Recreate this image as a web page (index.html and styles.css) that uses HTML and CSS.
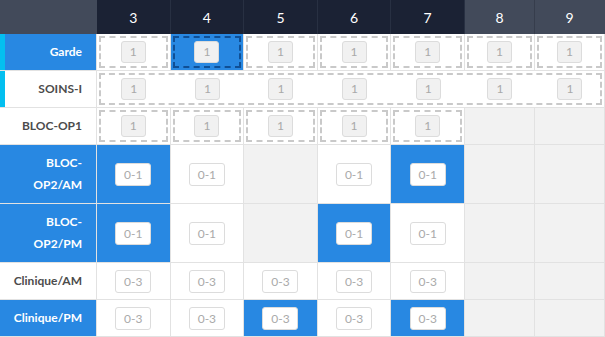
FILE: index.html
```html
<!DOCTYPE html>
<html lang="fr">
<head>
<meta charset="utf-8">
<title>Planning</title>
<link rel="stylesheet" href="styles.css">
</head>
<body>
<table class="planning">
  <colgroup>
    <col class="c-label">
    <col class="c-day"><col class="c-day"><col class="c-day"><col class="c-day"><col class="c-day">
    <col class="c-we"><col class="c-we">
  </colgroup>
  <thead>
    <tr>
      <th class="corner"></th>
      <th class="day">3</th>
      <th class="day">4</th>
      <th class="day">5</th>
      <th class="day">6</th>
      <th class="day">7</th>
      <th class="day day--we">8</th>
      <th class="day day--we">9</th>
    </tr>
  </thead>
  <tbody>
    <tr class="row">
      <th class="label label--blue label--flag">Garde</th>
      <td class="cell"><div class="slot"><span class="pill">1</span></div></td>
      <td class="cell cell--blue"><div class="slot slot--active"><span class="pill">1</span></div></td>
      <td class="cell"><div class="slot"><span class="pill">1</span></div></td>
      <td class="cell"><div class="slot"><span class="pill">1</span></div></td>
      <td class="cell"><div class="slot"><span class="pill">1</span></div></td>
      <td class="cell"><div class="slot"><span class="pill">1</span></div></td>
      <td class="cell"><div class="slot"><span class="pill">1</span></div></td>
    </tr>
    <tr class="row">
      <th class="label label--flag">SOINS-I</th>
      <td class="cell" colspan="7">
        <div class="slot slot--wide">
          <div class="slot-grid">
            <span class="slot-col"><span class="pill">1</span></span>
            <span class="slot-col"><span class="pill">1</span></span>
            <span class="slot-col"><span class="pill">1</span></span>
            <span class="slot-col"><span class="pill">1</span></span>
            <span class="slot-col"><span class="pill">1</span></span>
            <span class="slot-col"><span class="pill">1</span></span>
            <span class="slot-col"><span class="pill">1</span></span>
          </div>
        </div>
      </td>
    </tr>
    <tr class="row">
      <th class="label">BLOC-OP1</th>
      <td class="cell"><div class="slot"><span class="pill">1</span></div></td>
      <td class="cell"><div class="slot"><span class="pill">1</span></div></td>
      <td class="cell"><div class="slot"><span class="pill">1</span></div></td>
      <td class="cell"><div class="slot"><span class="pill">1</span></div></td>
      <td class="cell"><div class="slot"><span class="pill">1</span></div></td>
      <td class="cell cell--off"></td>
      <td class="cell cell--off"></td>
    </tr>
    <tr class="row row--tall">
      <th class="label label--blue">BLOC-OP2/AM</th>
      <td class="cell cell--blue"><span class="btn">0-1</span></td>
      <td class="cell"><span class="btn">0-1</span></td>
      <td class="cell cell--off"></td>
      <td class="cell"><span class="btn">0-1</span></td>
      <td class="cell cell--blue"><span class="btn">0-1</span></td>
      <td class="cell cell--off"></td>
      <td class="cell cell--off"></td>
    </tr>
    <tr class="row row--tall">
      <th class="label label--blue">BLOC-OP2/PM</th>
      <td class="cell cell--blue"><span class="btn">0-1</span></td>
      <td class="cell"><span class="btn">0-1</span></td>
      <td class="cell cell--off"></td>
      <td class="cell cell--blue"><span class="btn">0-1</span></td>
      <td class="cell"><span class="btn">0-1</span></td>
      <td class="cell cell--off"></td>
      <td class="cell cell--off"></td>
    </tr>
    <tr class="row">
      <th class="label">Clinique/AM</th>
      <td class="cell"><span class="btn">0-3</span></td>
      <td class="cell"><span class="btn">0-3</span></td>
      <td class="cell"><span class="btn">0-3</span></td>
      <td class="cell"><span class="btn">0-3</span></td>
      <td class="cell"><span class="btn">0-3</span></td>
      <td class="cell cell--off"></td>
      <td class="cell cell--off"></td>
    </tr>
    <tr class="row">
      <th class="label label--blue">Clinique/PM</th>
      <td class="cell"><span class="btn">0-3</span></td>
      <td class="cell"><span class="btn">0-3</span></td>
      <td class="cell cell--blue"><span class="btn">0-3</span></td>
      <td class="cell"><span class="btn">0-3</span></td>
      <td class="cell cell--blue"><span class="btn">0-3</span></td>
      <td class="cell cell--off"></td>
      <td class="cell cell--off"></td>
    </tr>
  </tbody>
</table>
</body>
</html>
```

FILE: styles.css
```css
* {
  box-sizing: border-box;
}

html, body {
  margin: 0;
  padding: 0;
  background: #ffffff;
}

body {
  font-family: Lato, "Open Sans", "Liberation Sans", sans-serif;
}

.planning {
  width: 605px;
  border-collapse: separate;
  border-spacing: 0;
  table-layout: fixed;
}

.c-label { width: 97px; }
.c-day { width: 73.6px; }
.c-we { width: 70px; }

/* header */
.planning thead th {
  height: 34px;
  padding: 0;
  background: #1b2234;
  color: #ffffff;
  font-size: 14px;
  font-weight: 400;
  text-align: center;
  vertical-align: middle;
  border-right: 1px solid #283042;
}

.planning thead th.corner {
  background: #424a5a;
  border-right: 0;
}

.planning thead th.day--we {
  background: #424a5a;
  border-right-color: #363d4c;
}

.planning thead th.day--we:last-child {
  border-right-color: #424a5a;
}

/* rows */
.row > th,
.row > td {
  height: 37px;
  border-right: 1px solid #e2e2e2;
  border-bottom: 1px solid #e2e2e2;
  vertical-align: middle;
}

.row--tall > th,
.row--tall > td {
  height: 59px;
}

.label {
  padding: 0 14px 0 8px;
  text-align: right;
  font-size: 12px;
  font-weight: 700;
  line-height: 22px;
  color: #4c4c4c;
  background: #ffffff;
}

.label--blue {
  background: #2888e2;
  color: #ffffff;
}

.label--flag {
  box-shadow: inset 5px 0 0 #03bff0;
}

.cell {
  padding: 2px;
  text-align: center;
  background: #ffffff;
}

.cell--blue {
  background: #2888e2;
}

.cell--off {
  background: #f2f2f2;
}

/* dashed slots */
.slot {
  height: 32px;
  border: 2px dashed #c9c9c9;
  display: flex;
  align-items: center;
  justify-content: center;
}

.slot--active {
  border-color: #0f4f95;
}

.slot--wide {
  justify-content: flex-start;
  overflow: hidden;
}

.slot-grid {
  display: grid;
  grid-template-columns: repeat(5, 73.6px) 70px 70px;
  margin-left: -4px;
  flex: none;
}

.slot-col {
  display: flex;
  justify-content: center;
}

.pill {
  display: inline-block;
  width: 25px;
  height: 22px;
  border: 1px solid #dcdcdc;
  border-radius: 3px;
  background: #f1f1f1;
  color: #a9a9a9;
  font-size: 12px;
  line-height: 20px;
  text-align: center;
}

.btn {
  display: inline-block;
  width: 36px;
  height: 23px;
  border: 1px solid #dcdcdc;
  border-radius: 3px;
  background: #ffffff;
  color: #aaaaaa;
  font-size: 12px;
  line-height: 21px;
  text-align: center;
}
```
